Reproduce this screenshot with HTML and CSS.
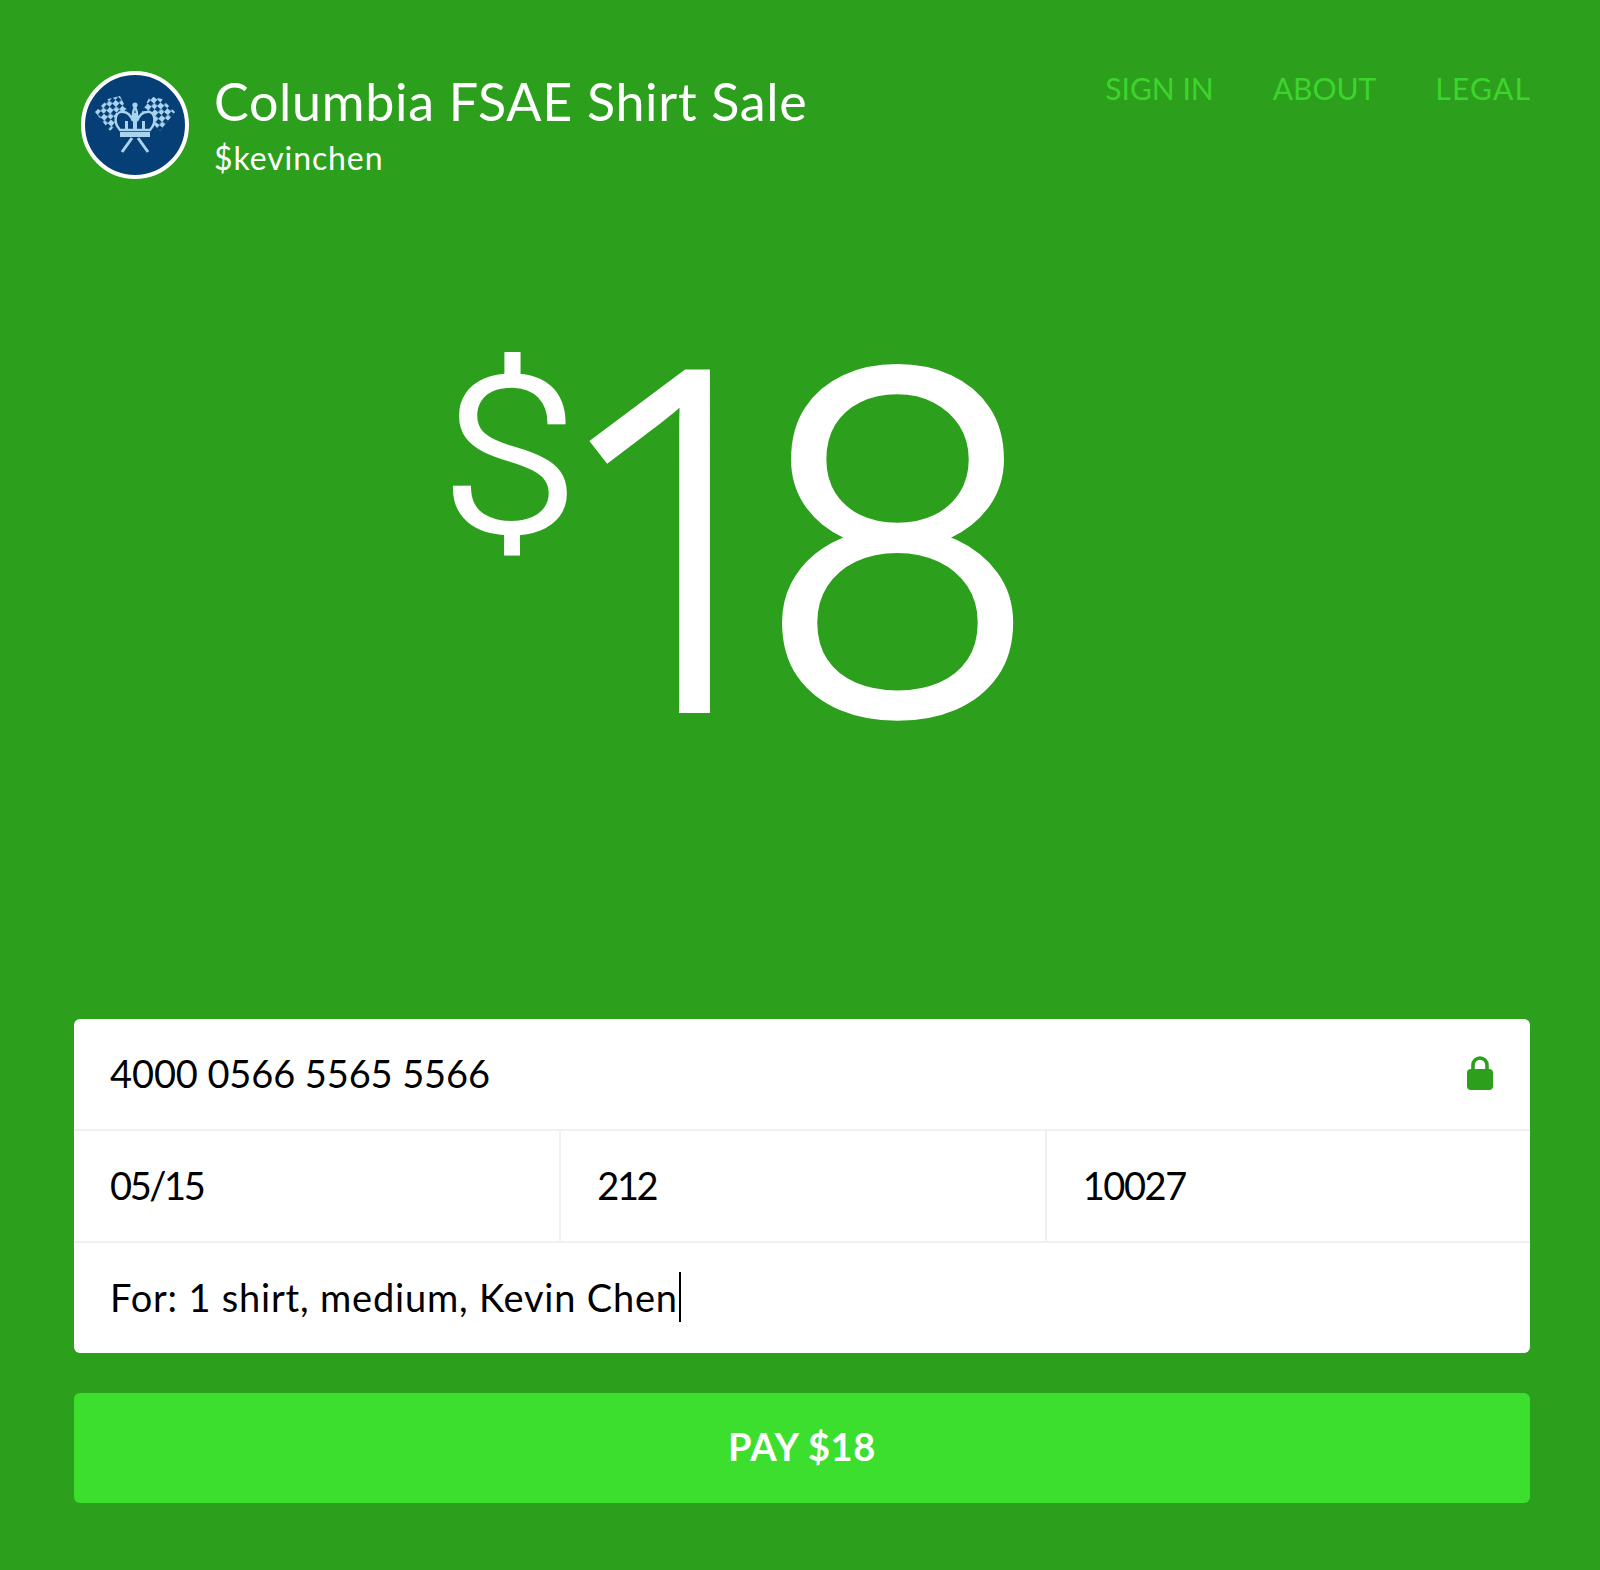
FILE: index.html
```html
<!DOCTYPE html>
<html lang="en">
<head>
<meta charset="UTF-8" />
<title>Columbia FSAE Shirt Sale</title>
<link rel="stylesheet" href="styles.css">
</head>
<body>
  <header class="top">
    <div class="seller">
      <svg class="avatar" viewBox="0 0 108 108" aria-hidden="true">
        <defs>
          <pattern id="checks" width="9" height="9" patternUnits="userSpaceOnUse" patternTransform="rotate(40)">
            <rect width="5" height="5" fill="#a9d3ee" />
            <rect x="4.5" y="4.5" width="5" height="5" fill="#a9d3ee" />
          </pattern>
        </defs>
        <circle cx="54" cy="54" r="52" fill="#063f75" stroke="#fff" stroke-width="4" />
        <path d="M27 28 39 25 47 41 29 60 14 41Z" fill="url(#checks)" />
        <path d="M81 28 69 25 61 41 79 60 94 41Z" fill="url(#checks)" />
        <path d="M39 59C31 50 35 40 42 41 47 41 50 45 52 50 52 45 51 41 54 36 57 41 56 45 56 50 58 45 61 41 66 41 73 40 77 50 69 59Z" fill="#063f75" stroke="#a9d3ee" stroke-width="2.4" />
        <circle cx="54" cy="34" r="2.6" fill="#a9d3ee" />
        <path d="M52 42h4v16h-4zM44 50h3v8h-3zM61 50h3v8h-3z" fill="#a9d3ee" />
        <path d="M39 61h30v5H39z" fill="#a9d3ee" />
        <path d="M51 67 41 81M57 67 67 81" stroke="#a9d3ee" stroke-width="3" fill="none" />
      </svg>
      <div>
        <h1 class="title">Columbia FSAE Shirt Sale</h1>
        <div class="cashtag">$kevinchen</div>
      </div>
    </div>
    <nav class="nav">
      <a href="#">SIGN IN</a>
      <a href="#">ABOUT</a>
      <a href="#">LEGAL</a>
    </nav>
  </header>

  <div class="amount"><span class="currency">$</span><span class="one">1</span><span class="eight">8</span></div>

  <form class="pay">
    <div class="card">
      <div class="row">
        <div class="field number">4000 0566 5565 5566</div>
        <svg class="lock" viewBox="0 0 26 34" aria-hidden="true">
          <path d="M6 14V9a7 7 0 0 1 14 0v5" fill="none" stroke="#2ca01c" stroke-width="3.6" />
          <rect y="13" width="26" height="21" rx="4" fill="#2ca01c" />
        </svg>
      </div>
      <div class="row thirds">
        <div class="field">05/15</div>
        <div class="field">212</div>
        <div class="field zip">10027</div>
      </div>
      <div class="row">
        <div class="field note"><span class="typed">For: 1 shirt, medium, Kevin Chen</span></div>
      </div>
    </div>
    <button class="submit" type="button">PAY $18</button>
  </form>
</body>
</html>
```

FILE: styles.css
```css
* {
  box-sizing: border-box;
}

body {
  margin: 0;
  height: 1570px;
  background: #2ca01c;
  color: #fff;
  font-family: Lato, "Open Sans", sans-serif;
  padding: 71px 70px 67px 74px;
  display: flex;
  flex-direction: column;
}

.top {
  display: flex;
  justify-content: space-between;
  align-items: flex-start;
  padding-left: 7px;
}

.seller {
  display: flex;
  gap: 25px;
}

.avatar {
  width: 108px;
  height: 108px;
  flex: none;
}

.title {
  margin: 0;
  font-size: 52px;
  font-weight: 400;
  line-height: 60px;
  letter-spacing: 0.7px;
}

.cashtag {
  margin-top: 8px;
  font-size: 32px;
  line-height: 38px;
  letter-spacing: 0.9px;
}

.nav {
  display: flex;
  gap: 59px;
  font-size: 30px;
  line-height: 36px;
  margin-top: -1px;
}

.nav a {
  color: #3ed42e;
  text-decoration: none;
}

.nav a:last-child {
  letter-spacing: 1.2px;
  margin-right: -1px;
}

/* big price: no single installed font has all three glyphs right */
.amount {
  flex: 1;
  display: flex;
  align-items: flex-start;
  padding-top: 131px;
  padding-left: 374px;
  font-weight: 300;
  line-height: 1;
}

.currency {
  font-family: Roboto, sans-serif;
  font-size: 217px;
  margin-top: 40px;
  letter-spacing: -19px;
  transform: scaleX(1.15);
  -webkit-text-stroke: 3px #fff;
}

.one {
  font-family: "Open Sans", sans-serif;
  font-size: 470px;
  margin-top: -18px;
  letter-spacing: -54px;
  -webkit-text-stroke: 8px #fff;
}

.eight {
  font-family: Roboto, sans-serif;
  font-size: 480px;
  margin-top: -1px;
  transform: scaleX(1.035);
  -webkit-text-stroke: 6px #fff;
}

.card {
  background: #fff;
  border-radius: 6px;
  color: #000;
  font-size: 38px;
}

.row {
  height: 112px;
  display: flex;
  align-items: center;
  justify-content: space-between;
  border-bottom: 2px solid #f0f0f0;
  padding: 0 37px 2px 36px;
}

.row:last-child {
  height: 110px;
  border-bottom: 0;
}

.thirds {
  display: grid;
  grid-template-columns: repeat(3, 1fr);
  align-items: stretch;
  padding: 0;
}

.thirds .field {
  display: flex;
  align-items: center;
  padding: 0 0 2px 36px;
  letter-spacing: -2.4px;
}

.thirds .field + .field {
  border-left: 2px solid #f0f0f0;
}

.thirds .zip {
  letter-spacing: -1.4px;
}

.number {
  letter-spacing: -0.1px;
}

.note {
  letter-spacing: 0.8px;
}

.typed {
  border-right: 2px solid #000;
  padding: 2px 1px 2px 0;
}

.lock {
  width: 26px;
  height: 34px;
}

.submit {
  display: block;
  width: 100%;
  height: 110px;
  margin-top: 40px;
  padding-bottom: 6px;
  border: 0;
  border-radius: 6px;
  background: #3cdf2d;
  color: #fff;
  font-family: inherit;
  font-size: 38px;
  font-weight: 700;
  letter-spacing: 0.6px;
}
```
